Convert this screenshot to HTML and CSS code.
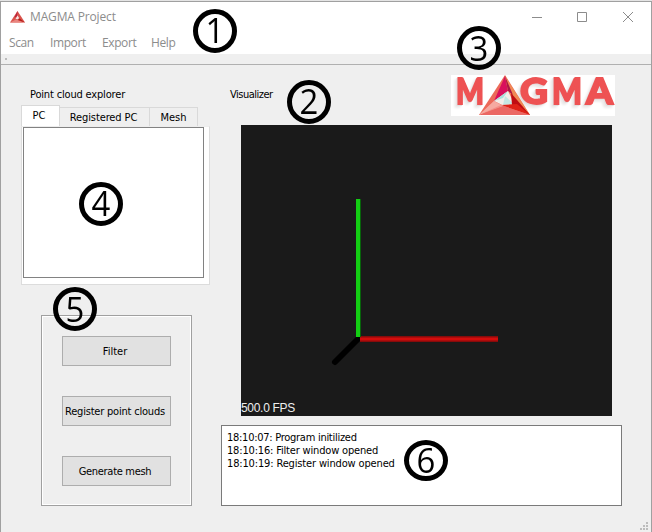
FILE: index.html
```html
<!DOCTYPE html>
<html lang="en">
<head>
<meta charset="utf-8">
<title>MAGMA Project</title>
<link rel="stylesheet" href="styles.css">
</head>
<body>
<div class="window">
  <header class="titlebar">
    <svg class="app-icon" width="15" height="12" viewBox="0 0 15 12"><path d="M7.5 0L15 11.5H0Z" fill="#d9534c"/><path d="M7.5 0L4.500 6.500L7 5.500Z" fill="#b8203c"/><path d="M7.500 4.500L10 8.500L5.500 8Z" fill="#f6e4e2"/><path d="M0 11.500L6 8.500L14 11.500Z" fill="#e98680"/><path d="M9 7L15 11.500L8 9Z" fill="#b51e18"/></svg>
    <span class="title">MAGMA Project</span>
    <svg class="controls" width="104" height="12" viewBox="0 0 104 12" fill="none" stroke="#8c8c8c"><path d="M0 6.500H10M45.500 1.500H54.500V10.500H45.500ZM91 1L101 11M101 1L91 11"/></svg>
  </header>
  <nav class="menubar"><span class="m1">Scan</span><span class="m2">Import</span><span class="m3">Export</span><span class="m4">Help</span></nav>
  <div class="toolbar"><i></i></div>
  <main class="content">
    <section class="left">
      <h2 class="label"><span class="t-explorer">Point cloud explorer</span></h2>
      <div class="tabs">
        <div class="tab active"><span>PC</span></div>
        <div class="tab reg"><span>Registered PC</span></div>
        <div class="tab mesh"><span>Mesh</span></div>
      </div>
      <div class="pane"><div class="list"></div></div>
      <div class="group">
        <button><span>Filter</span></button>
        <button><span class="t-register">Register point clouds</span></button>
        <button><span class="t-generate">Generate mesh</span></button>
      </div>
    </section>
    <section class="right">
      <div class="head">
        <h2 class="label"><span class="t-vis">Visualizer</span></h2>
        <svg class="logo" width="164" height="41" viewBox="0 0 164 41">
          <rect width="164" height="41" fill="#fff"/>
          <g class="logo-text">
            <text x="5" y="28.500" textLength="28" lengthAdjust="spacingAndGlyphs">M</text><text x="69" y="28.500" textLength="28" lengthAdjust="spacingAndGlyphs">G</text><text x="101" y="28.500" textLength="30" lengthAdjust="spacingAndGlyphs">M</text><text x="135" y="28.500" textLength="27" lengthAdjust="spacingAndGlyphs">A</text>
          </g>
          <path d="M54 0L79 40H28Z" fill="#ec6a59"/>
          <path d="M54 1L43 26L57 16Z" fill="#d9105c"/>
          <path d="M54 1L57 16L68 29L79 40Z" fill="#f08a54"/>
          <path d="M54 1L57 16L62 20Z" fill="#ab1646"/>
          <path d="M57 16L43 26L51 30L64 30Z" fill="#f3eee9"/>
          <path d="M57 16L43 26L52 23Z" fill="#a8dfdc"/>
          <path d="M54 21L52 30L63 29Z" fill="#c5e6e2"/>
          <path d="M60 18L79 40L61 30Z" fill="#c00c12"/>
          <path d="M50 30L66 29L79 40Z" fill="#df2218"/>
          <path d="M43 26L28 40L53 31Z" fill="#f28d86"/>
          <path d="M28 40L53 31L79 40Z" fill="#eb6763"/>
          <path d="M28 40L43 26L50 30Z" fill="#f6aaa1"/>
        </svg>
      </div>
      <div class="viewport">
        <svg class="axes" width="371" height="291" viewBox="0 0 371 291">
          <path d="M118 213L94 237" stroke="#000" stroke-width="6" stroke-linecap="round"/>
          <path d="M119 214H257" stroke="#870b0b" stroke-width="6"/>
          <path d="M119 214H257" stroke="#d40c0c" stroke-width="3"/>
          <path d="M117.500 74V212" stroke="#07640a" stroke-width="5"/>
          <path d="M117 74V212" stroke="#13ce13" stroke-width="4"/>
        </svg>
        <span class="fps">500.0 FPS</span>
      </div>
      <div class="log">
        <div><span class="l1">18:10:07: Program initilized</span></div>
        <div><span class="l2">18:10:16: Filter window opened</span></div>
        <div><span class="l3">18:10:19: Register window opened</span></div>
      </div>
    </section>
  </main>
  <svg class="grip" width="8" height="8" viewBox="0 0 8 8" fill="#bcbcbc"><path d="M6 0h2v2h-2zM3 3h2v2h-2zM6 3h2v2h-2zM0 6h2v2h-2zM3 6h2v2h-2zM6 6h2v2h-2z"/></svg>
  <div class="badge b1"><span>1</span></div>
  <div class="badge b2"><span>2</span></div>
  <div class="badge b3"><span>3</span></div>
  <div class="badge b4"><span>4</span></div>
  <div class="badge b5"><span>5</span></div>
  <div class="badge b6"><span>6</span></div>
</div>
</body>
</html>
```
FILE: styles.css
```css
* { box-sizing: border-box; }
body {
  margin: 0;
  padding-top: 1px;
  background: #e4e4e4;
  font: 11px/13px "DejaVu Sans Condensed", "DejaVu Sans", sans-serif;
  color: #000;
}
.window {
  position: relative;
  width: 652px;
  height: 531px;
  border: 1px solid #a0a0a0;
  border-bottom: 0;
  background: #efefef;
  overflow: hidden;
}
span { white-space: nowrap; }
.titlebar {
  display: flex;
  align-items: center;
  height: 29px;
  padding: 0 15px 0 9px;
  background: #fff;
  font: 12px/16px "Open Sans", sans-serif;
  color: #8c8c8c;
}
.title { margin-left: 5px; letter-spacing: -0.15px; }
.controls { margin-left: auto; }
.menubar {
  display: flex;
  height: 23px;
  padding-left: 8px;
  background: #fff;
  font: 12px/24px "Open Sans", sans-serif;
  color: #8c8c8c;
}
.m1 { width: 41px; }
.m2 { width: 52px; }
.m3 { width: 49px; }
.menubar span { letter-spacing: -0.4px; }
.toolbar {
  height: 11px;
  border-bottom: 1px solid #b0b0b0;
  padding: 4px 0 0 4px;
}
.toolbar i { display: block; width: 2px; height: 2px; background: #bbb; }
.content { display: flex; }
.left { width: 190px; margin-left: 20px; }
.label { margin: 0; font: inherit; }
.left > .label { padding: 23px 0 0 9px; height: 40px; }
.t-explorer { letter-spacing: -0.17px; }
.t-vis { letter-spacing: -0.5px; }
.t-register { letter-spacing: -0.2px; }
.t-generate { letter-spacing: -0.3px; }
.tabs { display: flex; align-items: flex-end; height: 21px; }
.tab {
  height: 19px;
  border: 1px solid #d9d9d9;
  border-left: 0;
  border-bottom: 0;
  text-align: center;
  line-height: 19px;
}
.tab.active {
  width: 39px;
  height: 21px;
  border-left: 1px solid #d9d9d9;
  background: #fff;
  padding-right: 3px;
  line-height: 20px;
}
.tab.reg { width: 90px; padding-right: 2px; letter-spacing: -0.1px; }
.tab.mesh { width: 48px; }
.pane {
  width: 189px;
  height: 159px;
  padding: 0 1px;
  border: 1px solid #dcdcdc;
  border-top-color: #ededed;
  background: #fff;
}
.list { width: 181px; height: 151px; border: 1px solid #828282; }
.group {
  display: flex;
  flex-direction: column;
  align-items: center;
  gap: 30px;
  width: 151px;
  height: 191px;
  margin: 30px 0 0 20px;
  padding: 20px 0 0 0;
  border: 1px solid #a0a0a0;
  box-shadow: inset 1px 1px #fff, inset -1px -1px #fff;
}
button {
  width: 109px;
  height: 30px;
  padding: 0 3px 0 0;
  border: 1px solid #adadad;
  background: #e1e1e1;
  font: inherit;
  color: #000;
}
.right { width: 401px; margin-left: 10px; }
.head {
  display: flex;
  justify-content: space-between;
  align-items: flex-start;
  height: 60px;
  padding: 10px 7px 0 9px;
}
.head .label { padding-top: 13px; }
.logo { overflow: visible; }
.logo-text {
  font: 900 36px Lato, sans-serif;
  fill: #ee5253;
  stroke: #ee5253;
  stroke-width: 1.8px;
  filter: drop-shadow(-1px 1px 0 #e2dede) drop-shadow(-2px 2px 1px #ebe8e8);
}
.viewport {
  display: flex;
  position: relative;
  width: 371px;
  height: 291px;
  margin-left: 20px;
  background: #1a1a1a;
}
.fps {
  position: absolute;
  left: 0;
  bottom: 1px;
  color: #eee;
  font: 12px/14px "Liberation Sans", sans-serif;
  letter-spacing: -0.3px;
}
.log {
  height: 81px;
  margin-top: 9px;
  padding: 5px 5px;
  border: 1px solid #7a7a7a;
  background: #fff;
}
.l1 { letter-spacing: -0.27px; }
.l2 { letter-spacing: -0.17px; }
.l3 { letter-spacing: -0.15px; }
.grip { position: absolute; right: 3px; bottom: 2px; }
.badge {
  position: absolute;
  width: 44px;
  height: 44px;
  border: 5px solid #000;
  border-radius: 50%;
  font: 35px/32px "Open Sans", sans-serif;
  color: #000;
  display: flex;
  justify-content: center;
}
.badge span { transform: scaleX(0.94); }
.b1 { left: 192px; top: 7px; }
.b2 { left: 286px; top: 78px; }
.b3 { left: 456px; top: 24px; line-height: 34px; }
.b4 { left: 78px; top: 180px; }
.b5 { left: 52px; top: 285px; line-height: 34px; }
.b6 { left: 403px; top: 438px; height: 41px; line-height: 30px; }
```
